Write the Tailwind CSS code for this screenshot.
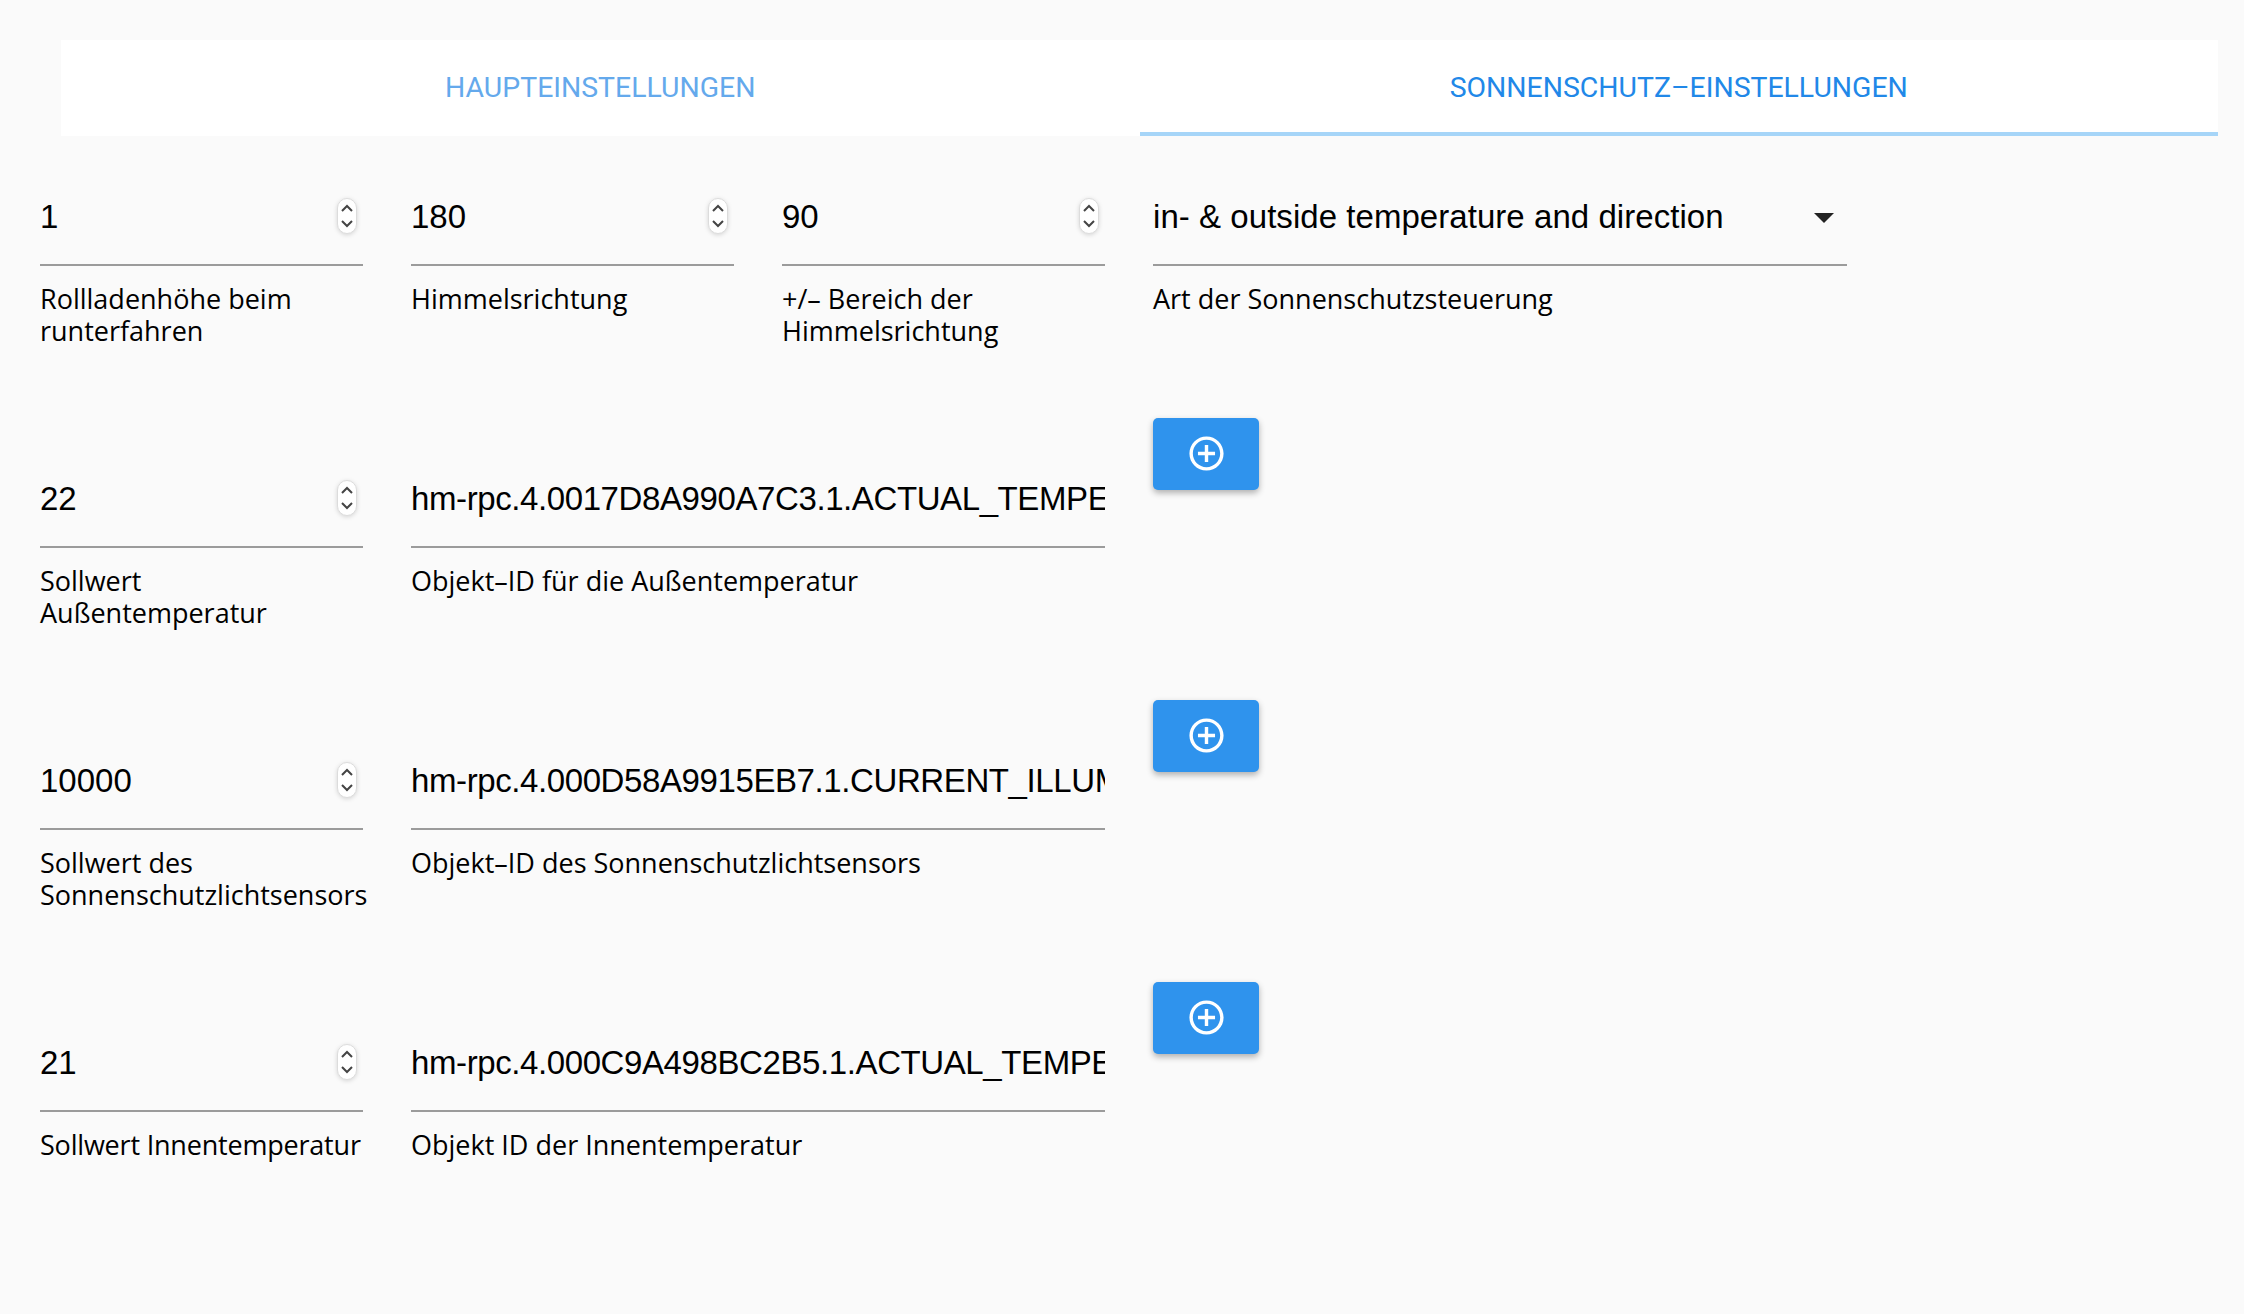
<!DOCTYPE html>
<html lang="en">
<head>
    <meta charset="UTF-8">
    <title>Sonnenschutz-Einstellungen</title>
    <script src="https://cdn.jsdelivr.net/npm/@tailwindcss/browser@4"></script>
</head>
<body class="bg-[#fafafa] w-[2244px] h-[1314px] overflow-hidden font-['Liberation_Sans',sans-serif]">
    <div class="pt-10 pl-[61px] pr-[26px]">
        <div class="flex h-24 bg-white text-[28.4px] font-['Roboto',sans-serif]">
            <div class="flex-1 flex items-center justify-center text-[#64a9ec]">HAUPTEINSTELLUNGEN</div>
            <div class="flex-1 flex items-center justify-center text-[#2188e8] border-y-4 border-t-transparent border-b-[#a6d5f8]">SONNENSCHUTZ–EINSTELLUNGEN</div>
        </div>
    </div>

    <div class="pl-10">
        <!-- Row 1 -->
        <div class="h-[282px] flex gap-12">
            <div class="w-[323px]">
                <div class="h-[130px] border-b-2 border-[#9b9b9b] flex items-center pt-[34px] text-[33px] text-black">
                    <span class="flex-1">1</span>
                    <svg class="mr-[6px] -mt-[2px] drop-shadow-sm" width="20" height="36" viewBox="0 0 20 36"><rect x="0.5" y="0.5" width="19" height="35" rx="9.5" fill="#fff" stroke="#dcdcdc"/><path d="M5 13l5-5 5 5M5 23l5 5 5-5" fill="none" stroke="#444" stroke-width="2"/></svg>
                </div>
                <p class="mt-[17px] text-[27px] leading-8 font-['Open_Sans',sans-serif] text-black">Rollladenhöhe beim<br>runterfahren</p>
            </div>
            <div class="w-[323px]">
                <div class="h-[130px] border-b-2 border-[#9b9b9b] flex items-center pt-[34px] text-[33px] text-black">
                    <span class="flex-1">180</span>
                    <svg class="mr-[6px] -mt-[2px] drop-shadow-sm" width="20" height="36" viewBox="0 0 20 36"><rect x="0.5" y="0.5" width="19" height="35" rx="9.5" fill="#fff" stroke="#dcdcdc"/><path d="M5 13l5-5 5 5M5 23l5 5 5-5" fill="none" stroke="#444" stroke-width="2"/></svg>
                </div>
                <p class="mt-[17px] text-[27px] leading-8 font-['Open_Sans',sans-serif] text-black">Himmelsrichtung</p>
            </div>
            <div class="w-[323px]">
                <div class="h-[130px] border-b-2 border-[#9b9b9b] flex items-center pt-[34px] text-[33px] text-black">
                    <span class="flex-1">90</span>
                    <svg class="mr-[6px] -mt-[2px] drop-shadow-sm" width="20" height="36" viewBox="0 0 20 36"><rect x="0.5" y="0.5" width="19" height="35" rx="9.5" fill="#fff" stroke="#dcdcdc"/><path d="M5 13l5-5 5 5M5 23l5 5 5-5" fill="none" stroke="#444" stroke-width="2"/></svg>
                </div>
                <p class="mt-[17px] text-[27px] leading-8 font-['Open_Sans',sans-serif] text-black">+/– Bereich der<br>Himmelsrichtung</p>
            </div>
            <div class="w-[694px]">
                <div class="h-[130px] border-b-2 border-[#9b9b9b] flex items-center pt-[34px] text-[33px] text-black">
                    <span class="flex-1 tracking-[0.05px]">in- &amp; outside temperature and direction</span>
                    <svg class="mr-[13px] mt-[1px]" width="20" height="10" viewBox="0 0 20 10"><path d="M0 0h20L10 10z" fill="#222"/></svg>
                </div>
                <p class="mt-[17px] text-[27px] leading-8 font-['Open_Sans',sans-serif] text-black">Art der Sonnenschutzsteuerung</p>
            </div>
        </div>

        <!-- Row 2 -->
        <div class="h-[282px] flex gap-12">
            <div class="w-[323px]">
                <div class="h-[130px] border-b-2 border-[#9b9b9b] flex items-center pt-[34px] text-[33px] text-black">
                    <span class="flex-1">22</span>
                    <svg class="mr-[6px] -mt-[2px] drop-shadow-sm" width="20" height="36" viewBox="0 0 20 36"><rect x="0.5" y="0.5" width="19" height="35" rx="9.5" fill="#fff" stroke="#dcdcdc"/><path d="M5 13l5-5 5 5M5 23l5 5 5-5" fill="none" stroke="#444" stroke-width="2"/></svg>
                </div>
                <p class="mt-[17px] text-[27px] leading-8 font-['Open_Sans',sans-serif] text-black">Sollwert<br>Außentemperatur</p>
            </div>
            <div class="w-[694px]">
                <div class="h-[130px] border-b-2 border-[#9b9b9b] flex items-center pt-[34px] text-[33px] text-black overflow-hidden whitespace-nowrap tracking-[-0.4px]">hm-rpc.4.0017D8A990A7C3.1.ACTUAL_TEMPERATURE</div>
                <p class="mt-[17px] text-[27px] leading-8 font-['Open_Sans',sans-serif] text-black">Objekt–ID für die Außentemperatur</p>
            </div>
            <button class="w-[106px] h-[72px] bg-[#2f93ed] rounded-[5px] shadow-[0_3px_6px_rgba(0,0,0,0.3)] flex items-center justify-center">
                <svg class="mb-[2px]" width="41" height="41" viewBox="0 0 24 24" fill="#fff"><path d="M13 7h-2v4H7v2h4v4h2v-4h4v-2h-4V7zm-1-5C6.48 2 2 6.48 2 12s4.48 10 10 10 10-4.48 10-10S17.52 2 12 2zm0 18c-4.41 0-8-3.59-8-8s3.59-8 8-8 8 3.59 8 8-3.59 8-8 8z"/></svg>
            </button>
        </div>

        <!-- Row 3 -->
        <div class="h-[282px] flex gap-12">
            <div class="w-[323px]">
                <div class="h-[130px] border-b-2 border-[#9b9b9b] flex items-center pt-[34px] text-[33px] text-black">
                    <span class="flex-1">10000</span>
                    <svg class="mr-[6px] -mt-[2px] drop-shadow-sm" width="20" height="36" viewBox="0 0 20 36"><rect x="0.5" y="0.5" width="19" height="35" rx="9.5" fill="#fff" stroke="#dcdcdc"/><path d="M5 13l5-5 5 5M5 23l5 5 5-5" fill="none" stroke="#444" stroke-width="2"/></svg>
                </div>
                <p class="mt-[17px] text-[27px] leading-8 font-['Open_Sans',sans-serif] text-black whitespace-nowrap">Sollwert des<br>Sonnenschutzlichtsensors</p>
            </div>
            <div class="w-[694px]">
                <div class="h-[130px] border-b-2 border-[#9b9b9b] flex items-center pt-[34px] text-[33px] text-black overflow-hidden whitespace-nowrap tracking-[-0.4px]">hm-rpc.4.000D58A9915EB7.1.CURRENT_ILLUMINATION</div>
                <p class="mt-[17px] text-[27px] leading-8 font-['Open_Sans',sans-serif] text-black">Objekt–ID des Sonnenschutzlichtsensors</p>
            </div>
            <button class="w-[106px] h-[72px] bg-[#2f93ed] rounded-[5px] shadow-[0_3px_6px_rgba(0,0,0,0.3)] flex items-center justify-center">
                <svg class="mb-[2px]" width="41" height="41" viewBox="0 0 24 24" fill="#fff"><path d="M13 7h-2v4H7v2h4v4h2v-4h4v-2h-4V7zm-1-5C6.48 2 2 6.48 2 12s4.48 10 10 10 10-4.48 10-10S17.52 2 12 2zm0 18c-4.41 0-8-3.59-8-8s3.59-8 8-8 8 3.59 8 8-3.59 8-8 8z"/></svg>
            </button>
        </div>

        <!-- Row 4 -->
        <div class="h-[282px] flex gap-12">
            <div class="w-[323px]">
                <div class="h-[130px] border-b-2 border-[#9b9b9b] flex items-center pt-[34px] text-[33px] text-black">
                    <span class="flex-1">21</span>
                    <svg class="mr-[6px] -mt-[2px] drop-shadow-sm" width="20" height="36" viewBox="0 0 20 36"><rect x="0.5" y="0.5" width="19" height="35" rx="9.5" fill="#fff" stroke="#dcdcdc"/><path d="M5 13l5-5 5 5M5 23l5 5 5-5" fill="none" stroke="#444" stroke-width="2"/></svg>
                </div>
                <p class="mt-[17px] text-[27px] leading-8 font-['Open_Sans',sans-serif] text-black whitespace-nowrap tracking-[-0.2px]">Sollwert Innentemperatur</p>
            </div>
            <div class="w-[694px]">
                <div class="h-[130px] border-b-2 border-[#9b9b9b] flex items-center pt-[34px] text-[33px] text-black overflow-hidden whitespace-nowrap tracking-[-0.4px]">hm-rpc.4.000C9A498BC2B5.1.ACTUAL_TEMPERATURE</div>
                <p class="mt-[17px] text-[27px] leading-8 font-['Open_Sans',sans-serif] text-black">Objekt ID der Innentemperatur</p>
            </div>
            <button class="w-[106px] h-[72px] bg-[#2f93ed] rounded-[5px] shadow-[0_3px_6px_rgba(0,0,0,0.3)] flex items-center justify-center">
                <svg class="mb-[2px]" width="41" height="41" viewBox="0 0 24 24" fill="#fff"><path d="M13 7h-2v4H7v2h4v4h2v-4h4v-2h-4V7zm-1-5C6.48 2 2 6.48 2 12s4.48 10 10 10 10-4.48 10-10S17.52 2 12 2zm0 18c-4.41 0-8-3.59-8-8s3.59-8 8-8 8 3.59 8 8-3.59 8-8 8z"/></svg>
            </button>
        </div>
    </div>
</body>
</html>
